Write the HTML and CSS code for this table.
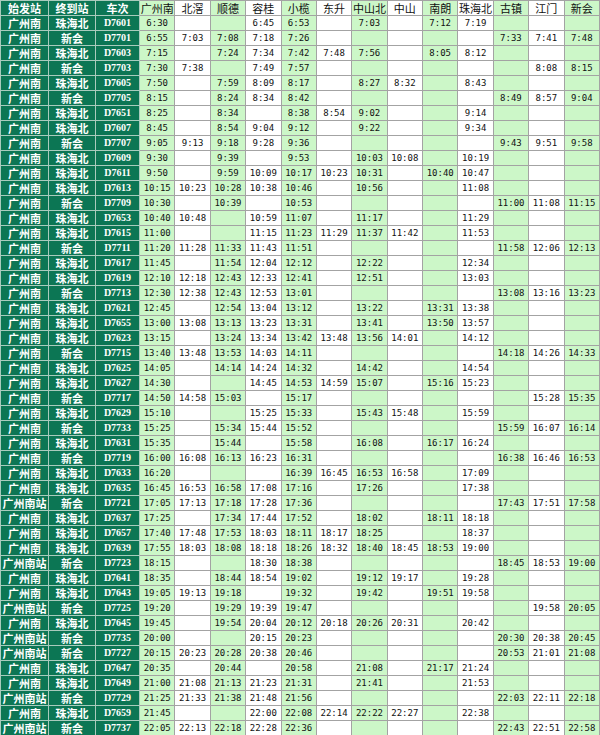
FILE: index.html
```html
<!DOCTYPE html>
<html lang="zh-CN">
<head>
<meta charset="utf-8">
<title>广珠城际时刻表</title>
<link rel="stylesheet" href="styles.css">
</head>
<body>
<table class="tt">
<colgroup>
<col class="c-dark c1"><col class="c-dark c2"><col class="c-dark c3">
<col class="c-g"><col class="c-w"><col class="c-g"><col class="c-w"><col class="c-g"><col class="c-w"><col class="c-g"><col class="c-w"><col class="c-g"><col class="c-w"><col class="c-g"><col class="c-w"><col class="c-g">
</colgroup>
<thead>
<tr><th>始发站</th><th>终到站</th><th>车次</th><th>广州南</th><th>北滘</th><th>顺德</th><th>容桂</th><th>小榄</th><th>东升</th><th>中山北</th><th>中山</th><th>南朗</th><th>珠海北</th><th>古镇</th><th>江门</th><th>新会</th></tr>
</thead>
<tbody>
<tr><td>广州南</td><td>珠海北</td><td>D7601</td><td>6:30</td><td></td><td></td><td>6:45</td><td>6:53</td><td></td><td>7:03</td><td></td><td>7:12</td><td>7:19</td><td></td><td></td><td></td></tr>
<tr><td>广州南</td><td>新会</td><td>D7701</td><td>6:55</td><td>7:03</td><td>7:08</td><td>7:18</td><td>7:26</td><td></td><td></td><td></td><td></td><td></td><td>7:33</td><td>7:41</td><td>7:48</td></tr>
<tr><td>广州南</td><td>珠海北</td><td>D7603</td><td>7:15</td><td></td><td>7:24</td><td>7:34</td><td>7:42</td><td>7:48</td><td>7:56</td><td></td><td>8:05</td><td>8:12</td><td></td><td></td><td></td></tr>
<tr><td>广州南</td><td>新会</td><td>D7703</td><td>7:30</td><td>7:38</td><td></td><td>7:49</td><td>7:57</td><td></td><td></td><td></td><td></td><td></td><td></td><td>8:08</td><td>8:15</td></tr>
<tr><td>广州南</td><td>珠海北</td><td>D7605</td><td>7:50</td><td></td><td>7:59</td><td>8:09</td><td>8:17</td><td></td><td>8:27</td><td>8:32</td><td></td><td>8:43</td><td></td><td></td><td></td></tr>
<tr><td>广州南</td><td>新会</td><td>D7705</td><td>8:15</td><td></td><td>8:24</td><td>8:34</td><td>8:42</td><td></td><td></td><td></td><td></td><td></td><td>8:49</td><td>8:57</td><td>9:04</td></tr>
<tr><td>广州南</td><td>珠海北</td><td>D7651</td><td>8:25</td><td></td><td>8:34</td><td></td><td>8:38</td><td>8:54</td><td>9:02</td><td></td><td></td><td>9:14</td><td></td><td></td><td></td></tr>
<tr><td>广州南</td><td>珠海北</td><td>D7607</td><td>8:45</td><td></td><td>8:54</td><td>9:04</td><td>9:12</td><td></td><td>9:22</td><td></td><td></td><td>9:34</td><td></td><td></td><td></td></tr>
<tr><td>广州南</td><td>新会</td><td>D7707</td><td>9:05</td><td>9:13</td><td>9:18</td><td>9:28</td><td>9:36</td><td></td><td></td><td></td><td></td><td></td><td>9:43</td><td>9:51</td><td>9:58</td></tr>
<tr><td>广州南</td><td>珠海北</td><td>D7609</td><td>9:30</td><td></td><td>9:39</td><td></td><td>9:53</td><td></td><td>10:03</td><td>10:08</td><td></td><td>10:19</td><td></td><td></td><td></td></tr>
<tr><td>广州南</td><td>珠海北</td><td>D7611</td><td>9:50</td><td></td><td>9:59</td><td>10:09</td><td>10:17</td><td>10:23</td><td>10:31</td><td></td><td>10:40</td><td>10:47</td><td></td><td></td><td></td></tr>
<tr><td>广州南</td><td>珠海北</td><td>D7613</td><td>10:15</td><td>10:23</td><td>10:28</td><td>10:38</td><td>10:46</td><td></td><td>10:56</td><td></td><td></td><td>11:08</td><td></td><td></td><td></td></tr>
<tr><td>广州南</td><td>新会</td><td>D7709</td><td>10:30</td><td></td><td>10:39</td><td></td><td>10:53</td><td></td><td></td><td></td><td></td><td></td><td>11:00</td><td>11:08</td><td>11:15</td></tr>
<tr><td>广州南</td><td>珠海北</td><td>D7653</td><td>10:40</td><td>10:48</td><td></td><td>10:59</td><td>11:07</td><td></td><td>11:17</td><td></td><td></td><td>11:29</td><td></td><td></td><td></td></tr>
<tr><td>广州南</td><td>珠海北</td><td>D7615</td><td>11:00</td><td></td><td></td><td>11:15</td><td>11:23</td><td>11:29</td><td>11:37</td><td>11:42</td><td></td><td>11:53</td><td></td><td></td><td></td></tr>
<tr><td>广州南</td><td>新会</td><td>D7711</td><td>11:20</td><td>11:28</td><td>11:33</td><td>11:43</td><td>11:51</td><td></td><td></td><td></td><td></td><td></td><td>11:58</td><td>12:06</td><td>12:13</td></tr>
<tr><td>广州南</td><td>珠海北</td><td>D7617</td><td>11:45</td><td></td><td>11:54</td><td>12:04</td><td>12:12</td><td></td><td>12:22</td><td></td><td></td><td>12:34</td><td></td><td></td><td></td></tr>
<tr><td>广州南</td><td>珠海北</td><td>D7619</td><td>12:10</td><td>12:18</td><td>12:43</td><td>12:33</td><td>12:41</td><td></td><td>12:51</td><td></td><td></td><td>13:03</td><td></td><td></td><td></td></tr>
<tr><td>广州南</td><td>新会</td><td>D7713</td><td>12:30</td><td>12:38</td><td>12:43</td><td>12:53</td><td>13:01</td><td></td><td></td><td></td><td></td><td></td><td>13:08</td><td>13:16</td><td>13:23</td></tr>
<tr><td>广州南</td><td>珠海北</td><td>D7621</td><td>12:45</td><td></td><td>12:54</td><td>13:04</td><td>13:12</td><td></td><td>13:22</td><td></td><td>13:31</td><td>13:38</td><td></td><td></td><td></td></tr>
<tr><td>广州南</td><td>珠海北</td><td>D7655</td><td>13:00</td><td>13:08</td><td>13:13</td><td>13:23</td><td>13:31</td><td></td><td>13:41</td><td></td><td>13:50</td><td>13:57</td><td></td><td></td><td></td></tr>
<tr><td>广州南</td><td>珠海北</td><td>D7623</td><td>13:15</td><td></td><td>13:24</td><td>13:34</td><td>13:42</td><td>13:48</td><td>13:56</td><td>14:01</td><td></td><td>14:12</td><td></td><td></td><td></td></tr>
<tr><td>广州南</td><td>新会</td><td>D7715</td><td>13:40</td><td>13:48</td><td>13:53</td><td>14:03</td><td>14:11</td><td></td><td></td><td></td><td></td><td></td><td>14:18</td><td>14:26</td><td>14:33</td></tr>
<tr><td>广州南</td><td>珠海北</td><td>D7625</td><td>14:05</td><td></td><td>14:14</td><td>14:24</td><td>14:32</td><td></td><td>14:42</td><td></td><td></td><td>14:54</td><td></td><td></td><td></td></tr>
<tr><td>广州南</td><td>珠海北</td><td>D7627</td><td>14:30</td><td></td><td></td><td>14:45</td><td>14:53</td><td>14:59</td><td>15:07</td><td></td><td>15:16</td><td>15:23</td><td></td><td></td><td></td></tr>
<tr><td>广州南</td><td>新会</td><td>D7717</td><td>14:50</td><td>14:58</td><td>15:03</td><td></td><td>15:17</td><td></td><td></td><td></td><td></td><td></td><td></td><td>15:28</td><td>15:35</td></tr>
<tr><td>广州南</td><td>珠海北</td><td>D7629</td><td>15:10</td><td></td><td></td><td>15:25</td><td>15:33</td><td></td><td>15:43</td><td>15:48</td><td></td><td>15:59</td><td></td><td></td><td></td></tr>
<tr><td>广州南</td><td>新会</td><td>D7733</td><td>15:25</td><td></td><td>15:34</td><td>15:44</td><td>15:52</td><td></td><td></td><td></td><td></td><td></td><td>15:59</td><td>16:07</td><td>16:14</td></tr>
<tr><td>广州南</td><td>珠海北</td><td>D7631</td><td>15:35</td><td></td><td>15:44</td><td></td><td>15:58</td><td></td><td>16:08</td><td></td><td>16:17</td><td>16:24</td><td></td><td></td><td></td></tr>
<tr><td>广州南</td><td>新会</td><td>D7719</td><td>16:00</td><td>16:08</td><td>16:13</td><td>16:23</td><td>16:31</td><td></td><td></td><td></td><td></td><td></td><td>16:38</td><td>16:46</td><td>16:53</td></tr>
<tr><td>广州南</td><td>珠海北</td><td>D7633</td><td>16:20</td><td></td><td></td><td></td><td>16:39</td><td>16:45</td><td>16:53</td><td>16:58</td><td></td><td>17:09</td><td></td><td></td><td></td></tr>
<tr><td>广州南</td><td>珠海北</td><td>D7635</td><td>16:45</td><td>16:53</td><td>16:58</td><td>17:08</td><td>17:16</td><td></td><td>17:26</td><td></td><td></td><td>17:38</td><td></td><td></td><td></td></tr>
<tr><td>广州南站</td><td>新会</td><td>D7721</td><td>17:05</td><td>17:13</td><td>17:18</td><td>17:28</td><td>17:36</td><td></td><td></td><td></td><td></td><td></td><td>17:43</td><td>17:51</td><td>17:58</td></tr>
<tr><td>广州南</td><td>珠海北</td><td>D7637</td><td>17:25</td><td></td><td>17:34</td><td>17:44</td><td>17:52</td><td></td><td>18:02</td><td></td><td>18:11</td><td>18:18</td><td></td><td></td><td></td></tr>
<tr><td>广州南</td><td>珠海北</td><td>D7657</td><td>17:40</td><td>17:48</td><td>17:53</td><td>18:03</td><td>18:11</td><td>18:17</td><td>18:25</td><td></td><td></td><td>18:37</td><td></td><td></td><td></td></tr>
<tr><td>广州南</td><td>珠海北</td><td>D7639</td><td>17:55</td><td>18:03</td><td>18:08</td><td>18:18</td><td>18:26</td><td>18:32</td><td>18:40</td><td>18:45</td><td>18:53</td><td>19:00</td><td></td><td></td><td></td></tr>
<tr><td>广州南站</td><td>新会</td><td>D7723</td><td>18:15</td><td></td><td></td><td>18:30</td><td>18:38</td><td></td><td></td><td></td><td></td><td></td><td>18:45</td><td>18:53</td><td>19:00</td></tr>
<tr><td>广州南</td><td>珠海北</td><td>D7641</td><td>18:35</td><td></td><td>18:44</td><td>18:54</td><td>19:02</td><td></td><td>19:12</td><td>19:17</td><td></td><td>19:28</td><td></td><td></td><td></td></tr>
<tr><td>广州南</td><td>珠海北</td><td>D7643</td><td>19:05</td><td>19:13</td><td>19:18</td><td></td><td>19:32</td><td></td><td>19:42</td><td></td><td>19:51</td><td>19:58</td><td></td><td></td><td></td></tr>
<tr><td>广州南站</td><td>新会</td><td>D7725</td><td>19:20</td><td></td><td>19:29</td><td>19:39</td><td>19:47</td><td></td><td></td><td></td><td></td><td></td><td></td><td>19:58</td><td>20:05</td></tr>
<tr><td>广州南</td><td>珠海北</td><td>D7645</td><td>19:45</td><td></td><td>19:54</td><td>20:04</td><td>20:12</td><td>20:18</td><td>20:26</td><td>20:31</td><td></td><td>20:42</td><td></td><td></td><td></td></tr>
<tr><td>广州南站</td><td>新会</td><td>D7735</td><td>20:00</td><td></td><td></td><td>20:15</td><td>20:23</td><td></td><td></td><td></td><td></td><td></td><td>20:30</td><td>20:38</td><td>20:45</td></tr>
<tr><td>广州南站</td><td>新会</td><td>D7727</td><td>20:15</td><td>20:23</td><td>20:28</td><td>20:38</td><td>20:46</td><td></td><td></td><td></td><td></td><td></td><td>20:53</td><td>21:01</td><td>21:08</td></tr>
<tr><td>广州南</td><td>珠海北</td><td>D7647</td><td>20:35</td><td></td><td>20:44</td><td></td><td>20:58</td><td></td><td>21:08</td><td></td><td>21:17</td><td>21:24</td><td></td><td></td><td></td></tr>
<tr><td>广州南</td><td>珠海北</td><td>D7649</td><td>21:00</td><td>21:08</td><td>21:13</td><td>21:23</td><td>21:31</td><td></td><td>21:41</td><td></td><td></td><td>21:53</td><td></td><td></td><td></td></tr>
<tr><td>广州南站</td><td>新会</td><td>D7729</td><td>21:25</td><td>21:33</td><td>21:38</td><td>21:48</td><td>21:56</td><td></td><td></td><td></td><td></td><td></td><td>22:03</td><td>22:11</td><td>22:18</td></tr>
<tr><td>广州南</td><td>珠海北</td><td>D7659</td><td>21:45</td><td></td><td></td><td>22:00</td><td>22:08</td><td>22:14</td><td>22:22</td><td>22:27</td><td></td><td>22:38</td><td></td><td></td><td></td></tr>
<tr><td>广州南站</td><td>新会</td><td>D7737</td><td>22:05</td><td>22:13</td><td>22:18</td><td>22:28</td><td>22:36</td><td></td><td></td><td></td><td></td><td></td><td>22:43</td><td>22:51</td><td>22:58</td></tr>
</tbody>
</table>
</body>
</html>
```

FILE: styles.css
```css
html, body {
  margin: 0;
  padding: 0;
  background: #ffffff;
}

.tt {
  width: 600px;
  table-layout: fixed;
  border-collapse: collapse;
  font-family: "DejaVu Sans Mono", "Liberation Mono", monospace;
  font-size: 9px;
  color: #111111;
}

.c1 { width: 48px; }
.c2 { width: 47px; }
.c3 { width: 44px; }

.c-dark { background: #0c7654; }
.c-g { background: #ccf7c8; }
.c-w { background: #ffffff; }

.tt tr {
  height: 15px;
}

.tt th,
.tt td {
  padding: 0;
  line-height: 12px;
  text-align: center;
  vertical-align: middle;
  white-space: nowrap;
  overflow: hidden;
  border: 1px solid #a3a3a3;
}

.tt th {
  font-family: "Noto Sans CJK SC", sans-serif;
  font-size: 11px;
  font-weight: normal;
  color: #111111;
}

.tt th:nth-child(-n+3),
.tt td:nth-child(-n+3) {
  color: #ffffff;
  font-weight: bold;
  border-color: #a9cbbd;
}

.tt th:nth-child(-n+3),
.tt td:nth-child(-n+2) {
  font-family: "Noto Sans CJK SC", sans-serif;
  font-size: 11px;
}

.tt td:nth-child(3) {
  font-family: "Liberation Serif", serif;
  font-size: 10px;
}
```
